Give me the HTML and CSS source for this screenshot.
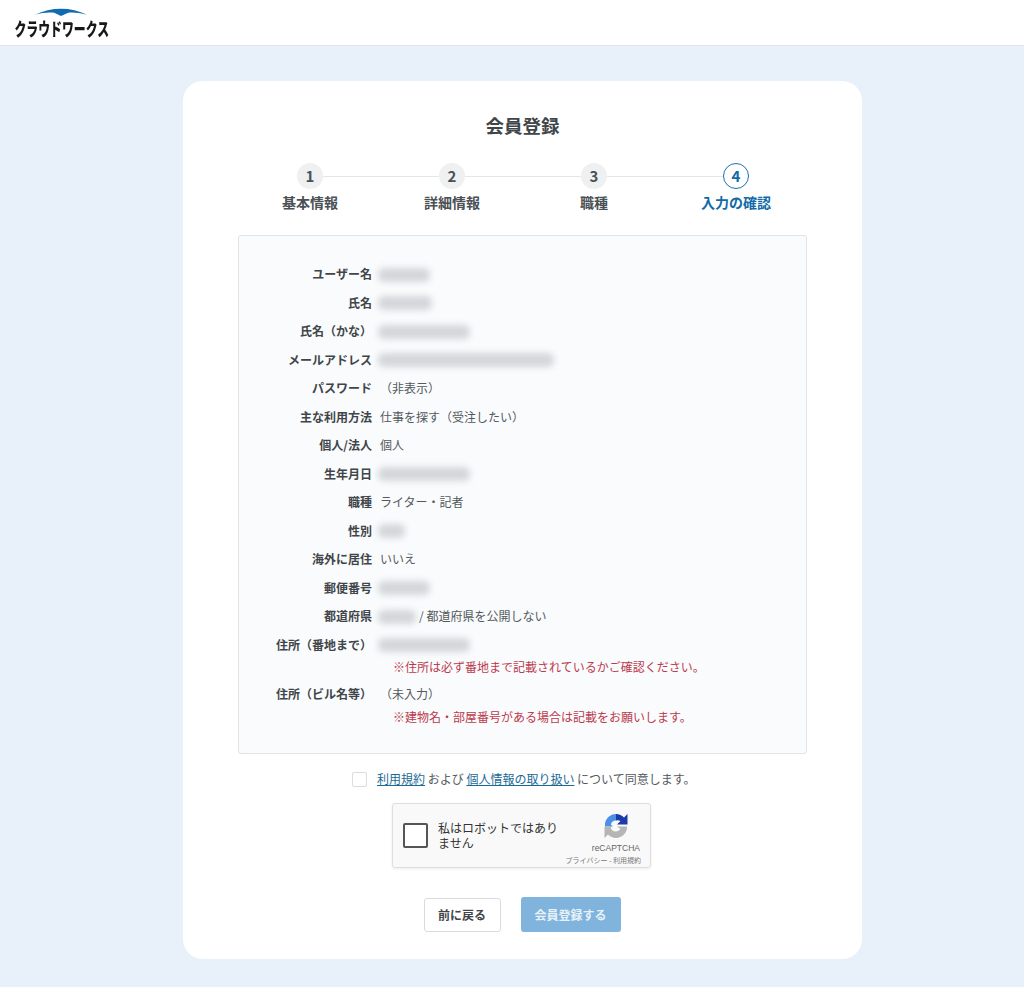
FILE: index.html
```html
<!DOCTYPE html>
<html lang="ja">
<head>
<meta charset="utf-8">
<title>会員登録</title>
<link rel="stylesheet" href="styles.css">
</head>
<body>
<header class="site-header">
  <div class="logo">
    <svg class="logo-arc" viewBox="0 0 60 10" aria-hidden="true"><path d="M1 7.6C10 3 20 .8 30 .8S50 3 59 7.6C50 5 43 4.600 38 5.200L30 9 22.500 5.200C16 4.600 9 5 1 7.600Z"/></svg>
    <span class="logo-text">クラウドワークス</span>
  </div>
</header>
<main class="page">
  <section class="card">
    <h1 class="title">会員登録</h1>
    <ol class="steps">
      <li class="step"><span class="step-num">1</span><span class="step-label">基本情報</span></li>
      <li class="step"><span class="step-num">2</span><span class="step-label">詳細情報</span></li>
      <li class="step"><span class="step-num">3</span><span class="step-label">職種</span></li>
      <li class="step step-current"><span class="step-num">4</span><span class="step-label">入力の確認</span></li>
    </ol>
    <div class="panel">
      <div class="row"><div class="key">ユーザー名</div><div class="val"><span class="blur w52"></span></div></div>
      <div class="row"><div class="key">氏名</div><div class="val"><span class="blur w53"></span></div></div>
      <div class="row"><div class="key">氏名（かな）</div><div class="val"><span class="blur w90"></span></div></div>
      <div class="row"><div class="key">メールアドレス</div><div class="val"><span class="blur w174"></span></div></div>
      <div class="row"><div class="key">パスワード</div><div class="val">（非表示）</div></div>
      <div class="row"><div class="key">主な利用方法</div><div class="val">仕事を探す（受注したい）</div></div>
      <div class="row"><div class="key">個人/法人</div><div class="val">個人</div></div>
      <div class="row"><div class="key">生年月日</div><div class="val"><span class="blur w90"></span></div></div>
      <div class="row"><div class="key">職種</div><div class="val">ライター・記者</div></div>
      <div class="row"><div class="key">性別</div><div class="val"><span class="blur w25"></span></div></div>
      <div class="row"><div class="key">海外に居住</div><div class="val">いいえ</div></div>
      <div class="row"><div class="key">郵便番号</div><div class="val"><span class="blur w52"></span></div></div>
      <div class="row"><div class="key">都道府県</div><div class="val"><span class="blur w36"></span> / 都道府県を公開しない</div></div>
      <div class="row"><div class="key">住所（番地まで）</div><div class="val"><span class="blur w90"></span></div></div>
      <p class="note">※住所は必ず番地まで記載されているかご確認ください。</p>
      <div class="row row-next"><div class="key">住所（ビル名等）</div><div class="val">（未入力）</div></div>
      <p class="note">※建物名・部屋番号がある場合は記載をお願いします。</p>
    </div>
    <div class="agree">
      <span class="agree-box"></span>
      <span class="agree-text"><a href="#">利用規約</a> および <a href="#">個人情報の取り扱い</a> について同意します。</span>
    </div>
    <div class="captcha">
      <span class="captcha-box"></span>
      <span class="captcha-text">私はロボットではあり<br>ません</span>
      <div class="captcha-brand">
        <svg class="captcha-logo" viewBox="0 0 28 28" aria-hidden="true">
          <path d="M3 14.500A11 11 0 0 1 14 2V8.500A5.500 5.500 0 0 0 8.800 12.500L11 14.500Z" fill="#4a90e8"/>
          <path d="M14 2A11 11 0 0 1 22 5.600L25.500 2V12.500H15L18.500 9A6 6 0 0 0 14 8.500Z" fill="#1c3aa9"/>
          <path d="M3 14.500H8.700A5.500 5.500 0 0 0 14 19.500 5.500 5.500 0 0 0 18.500 17L15 14.500H25A11 11 0 0 1 14 26 11 11 0 0 1 6 22.500L2.500 26V14.500Z" fill="#b5b5b5"/>
        </svg>
        <span class="captcha-name">reCAPTCHA</span>
        <span class="captcha-links">プライバシー - 利用規約</span>
      </div>
    </div>
    <div class="actions">
      <a class="btn btn-back" href="#">前に戻る</a>
      <a class="btn btn-submit" href="#">会員登録する</a>
    </div>
  </section>
</main>
</body>
</html>
```
FILE: styles.css
```css
* { box-sizing: border-box; }
html, body { margin: 0; padding: 0; }
body {
  background: #e8f1fa;
  color: #3f4549;
  font-family: "Noto Sans CJK JP", "Noto Sans", sans-serif;
  font-size: 12px;
  line-height: 1.5;
}
.site-header {
  height: 46px;
  background: #fff;
  border-bottom: 1px solid #dde5ee;
  padding: 8px 0 0 16px;
}
.logo { width: 92px; display: flex; flex-direction: column; align-items: center; }
.logo-arc { width: 58px; height: 9px; fill: #0f6cb0; align-self: flex-start; margin-left: 16px; }
.logo-text {
  font-size: 18px;
  font-weight: 900;
  line-height: 21px;
  color: #16181a;
  white-space: nowrap;
  transform: scaleX(.66);
  transform-origin: center;
  margin-top: 1px;
}
.page { padding: 35px 0 28px 21px; display: flex; justify-content: center; }
.card {
  width: 679px;
  height: 878px;
  background: #fff;
  border-radius: 20px;
  padding: 31px 55px 0;
}
.title {
  margin: 0;
  text-align: center;
  font-size: 18.500px;
  font-weight: 700;
  line-height: 26px;
  color: #3f4549;
}
.steps {
  list-style: none;
  margin: 25px 0 0 1px;
  padding: 0;
  display: grid;
  grid-template-columns: repeat(4, 142px);
  position: relative;
}
.steps::before {
  content: "";
  position: absolute;
  left: 71px;
  width: 426px;
  top: 13px;
  height: 1px;
  background: #e2e7ea;
}
.step {
  display: flex;
  flex-direction: column;
  align-items: center;
  position: relative;
}
.step-num {
  width: 26px;
  height: 26px;
  border-radius: 50%;
  background: #eef0f2;
  display: flex;
  align-items: center;
  justify-content: center;
  font-size: 15px;
  font-weight: 700;
  color: #4a5054;
}
.step-label {
  margin-top: 3px;
  font-size: 14px;
  font-weight: 700;
  line-height: 20px;
  color: #4a5054;
}
.step-current .step-num { background: #fff; border: 1px solid #1c6fa8; color: #126aa6; }
.step-current .step-label { color: #126aa6; }
.panel {
  margin-top: 23px;
  height: 519px;
  background: #f9fbfc;
  border: 1px solid #e0e5e9;
  border-radius: 3px;
  padding: 24px 0 0;
}
.row {
  display: flex;
  height: 28.500px;
  line-height: 28.500px;
}
.row-next { margin-top: 6px; }
.key {
  width: 133px;
  flex: none;
  text-align: right;
  font-weight: 700;
  color: #3f4549;
  white-space: nowrap;
}
.val {
  margin-left: 8px;
  color: #54595d;
  white-space: nowrap;
  display: flex;
  align-items: center;
  gap: 3px;
}
.blur {
  display: inline-block;
  height: 14px;
  background: #d4d7da;
  border-radius: 6px;
  filter: blur(3px);
  margin: 1px 0 0 -2px;
}
.w25 { width: 27px; }
.w36 { width: 38px; }
.w52 { width: 52px; }
.w53 { width: 54px; }
.w90 { width: 92px; }
.w174 { width: 176px; }
.note {
  margin: 0 0 0 154px;
  color: #bb3a4c;
  line-height: 15px;
}
.agree {
  margin-top: 15px;
  padding-left: 114px;
  display: flex;
  align-items: center;
  gap: 10px;
  height: 20px;
}
.agree-box {
  width: 15px;
  height: 15px;
  background: #fff;
  border: 1px solid #d9dde0;
  border-radius: 2px;
  flex: none;
}
.agree-text { white-space: nowrap; color: #54595d; }
.agree-text a { color: #1a6a96; }
.captcha {
  margin: 14px 0 0 154px;
  width: 259px;
  height: 65px;
  background: #f9f9f9;
  border: 1px solid #dedede;
  border-radius: 3px;
  box-shadow: 0 1px 3px rgba(0, 0, 0, .08);
  display: flex;
  align-items: center;
  padding: 0 9px 0 10px;
}
.captcha-box {
  width: 25px;
  height: 25px;
  flex: none;
  background: #fff;
  border: 2px solid #555;
  border-radius: 2px;
}
.captcha-text {
  margin-left: 10px;
  flex: 1;
  color: #333;
  font-size: 12px;
  line-height: 15px;
  white-space: nowrap;
  margin-top: -1px;
}
.captcha-brand {
  display: flex;
  flex-direction: column;
  align-items: flex-end;
  align-self: flex-start;
  position: relative;
  height: 100%;
}
.captcha-logo { width: 28px; height: 28px; margin: 8px 11px 0 0; display: block; }
.captcha-name { font-family: "Liberation Sans", sans-serif; font-size: 8.500px; line-height: 11px; color: #666; margin: 3px 1px 0 0; }
.captcha-links { font-size: 7px; line-height: 10px; color: #777; margin-top: 1px; white-space: nowrap; }
.actions {
  margin-top: 29px;
  display: flex;
  justify-content: center;
  gap: 20px;
  align-items: center;
  padding-right: 1px;
}
.btn {
  display: flex;
  align-items: center;
  justify-content: center;
  text-decoration: none;
  font-weight: 700;
  font-size: 12px;
  border-radius: 3px;
}
.btn-back {
  width: 77px;
  height: 34px;
  background: #fff;
  border: 1px solid #d8dcdf;
  color: #3f4549;
}
.btn-submit {
  width: 100px;
  height: 35px;
  background: #80b4dc;
  color: #e6f1f9;
}
```
